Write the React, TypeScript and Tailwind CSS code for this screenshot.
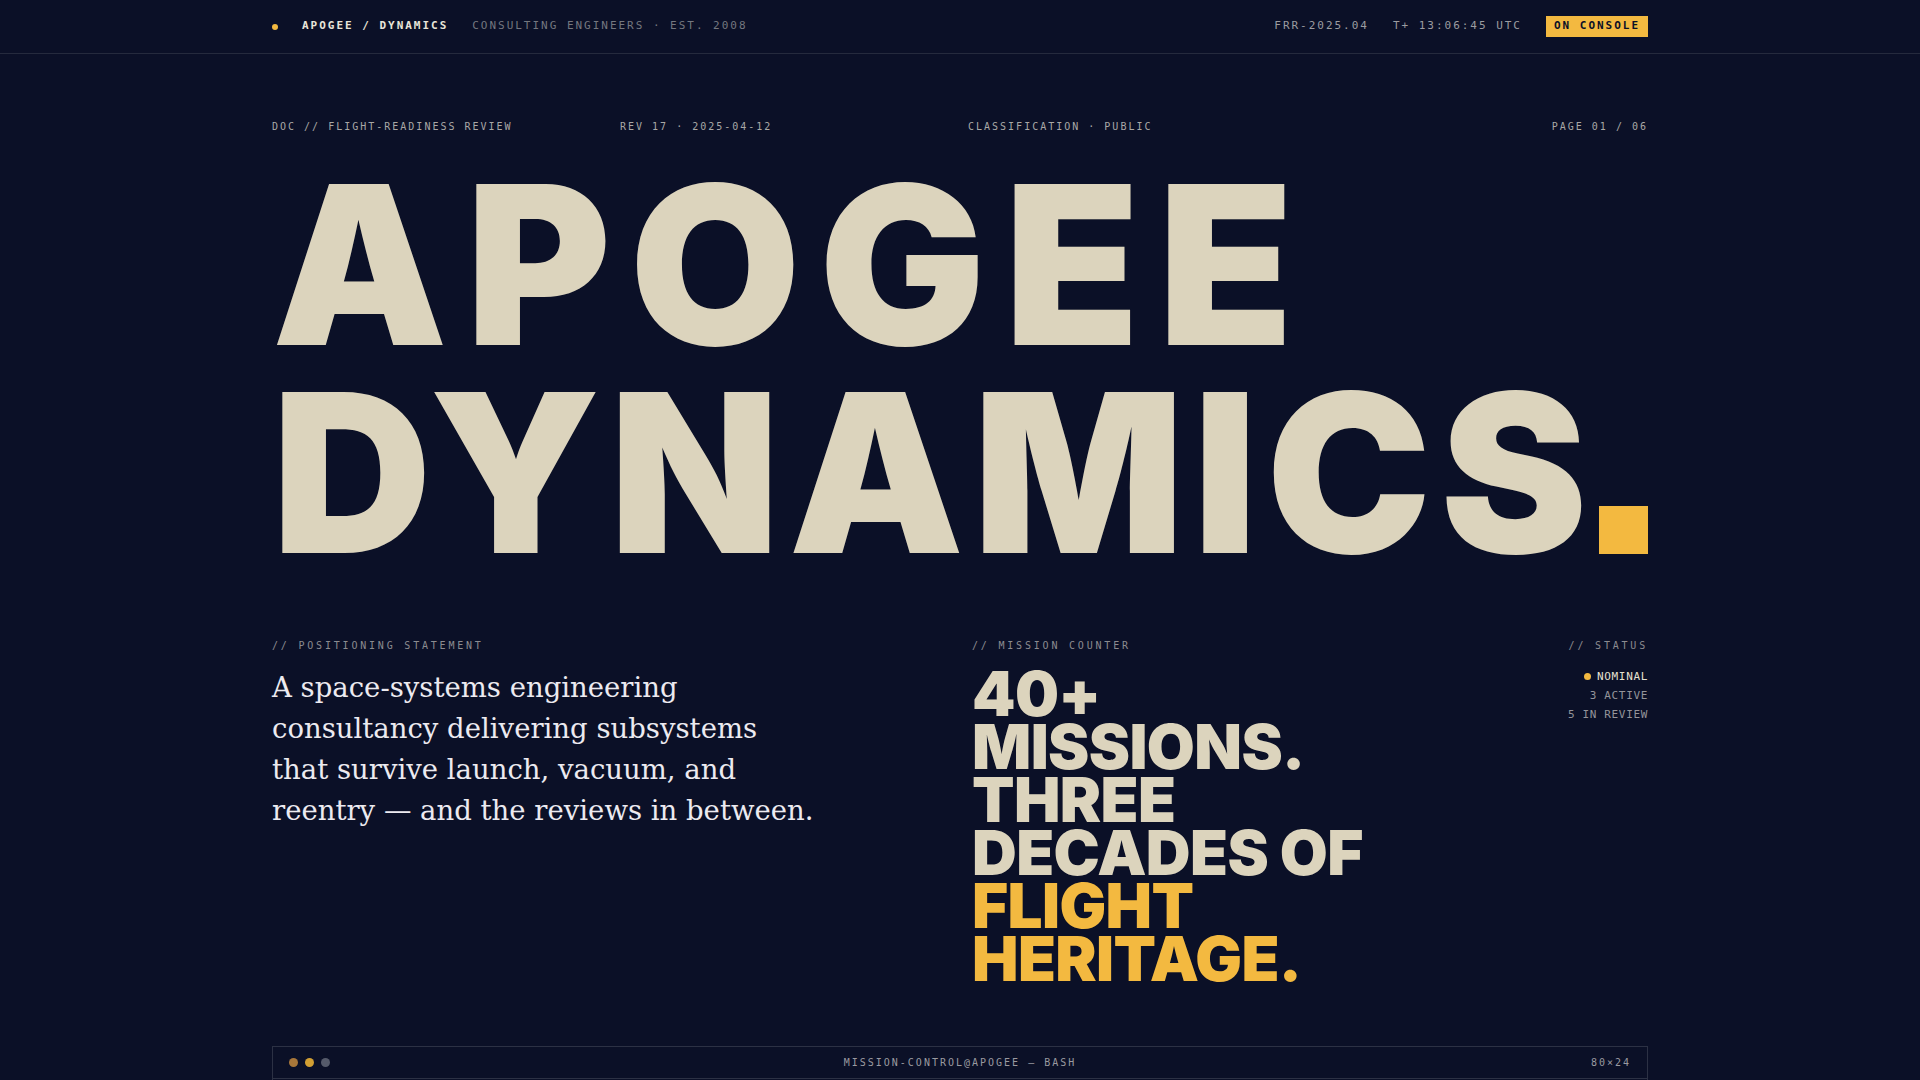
const mono = "font-['DejaVu_Sans_Mono','Liberation_Mono',monospace]";
const grot = "font-['Inter','Roboto',sans-serif]";

const TopBar = () => (
  <header className="border-b border-[#252a3d]">
    <div className={`mx-auto flex h-[53px] max-w-[1376px] items-center justify-between text-[11px] tracking-[0.18em] ${mono}`}>
      <div className="flex items-center gap-6">
        <span className="h-[6px] w-[6px] rounded-full bg-[#f3b940]" />
        <span className="font-bold text-[#e9e5d9]">APOGEE / DYNAMICS</span>
        <span className="text-[#74777f]">CONSULTING ENGINEERS · EST. 2008</span>
      </div>
      <div className="flex items-center gap-6 text-[#9c9ca0]">
        <span>FRR-2025.04</span>
        <span>T+ 13:06:45 UTC</span>
        <span className="flex h-[21px] items-center bg-[#f3b940] px-[8px] font-bold text-[#0b1027]">ON CONSOLE</span>
      </div>
    </div>
  </header>
);

const MetaRow = () => (
  <div className={`grid grid-cols-4 gap-4 text-[10px] leading-[15px] tracking-[0.2em] text-[#a9a8a6] ${mono}`}>
    <span>DOC // FLIGHT-READINESS REVIEW</span>
    <span>REV 17 · 2025-04-12</span>
    <span>CLASSIFICATION · PUBLIC</span>
    <span className="text-right">PAGE 01 / 06</span>
  </div>
);

const Label = ({ children, right }: { children: string; right?: boolean }) => (
  <div className={`text-[10px] leading-[15px] tracking-[0.28em] text-[#8b8b90] ${mono} ${right ? "text-right" : ""}`}>
    {children}
  </div>
);

export default function App() {
  return (
    <div className="min-h-screen bg-[#0b1027] pb-10">
      <TopBar />
      <main className="mx-auto max-w-[1376px]">
        <div className="pt-[65px]">
          <MetaRow />
        </div>

        <h1 className={`mt-[27px] text-[221px] font-black leading-[208px] text-[#dcd4bd] ${grot}`}>
          <span className="block tracking-[0.083em]">APOGEE</span>
          <span className="flex items-end justify-between">
            <span className="tracking-[0.04em]">DYNAMICS</span>
            <span className="mb-[23px] inline-block h-[48px] w-[49px] shrink-0 bg-[#f3b940]" />
          </span>
        </h1>

        <section className="mt-[61px] grid grid-cols-12 gap-6">
          <div className="col-span-6">
            <Label>// POSITIONING STATEMENT</Label>
            <p className="mt-[14px] font-['DejaVu_Serif','Liberation_Serif',serif] text-[27.5px] leading-[41px] text-[#eceaf0]">
              A space-systems engineering
              <br />
              consultancy delivering subsystems
              <br />
              that survive launch, vacuum, and
              <br />
              reentry — and the reviews in between.
            </p>
          </div>
          <div className="col-span-4">
            <Label>// MISSION COUNTER</Label>
            <div className={`mt-[14px] text-[62px] font-black leading-[53px] tracking-[-0.01em] text-[#dcd4bd] ${grot}`}>
              <div>40+</div>
              <div>MISSIONS.</div>
              <div>THREE</div>
              <div>DECADES OF</div>
              <div className="text-[#f3b940]">FLIGHT</div>
              <div className="text-[#f3b940]">HERITAGE.</div>
            </div>
          </div>
          <div className="col-span-2">
            <Label right>// STATUS</Label>
            <ul className={`mt-[14px] text-right text-[11px] leading-[19px] tracking-[0.06em] text-[#94949a] ${mono}`}>
              <li className="flex items-center justify-end gap-[6px] text-[#e6e1d2]">
                <span className="h-[7px] w-[7px] rounded-full bg-[#f3b940]" />
                NOMINAL
              </li>
              <li>3 ACTIVE</li>
              <li>5 IN REVIEW</li>
            </ul>
          </div>
        </section>

        <div className="mt-[61px] border border-[#2c3144]">
          <div className={`flex h-[32px] items-center justify-between border-b border-[#2c3144] px-4 text-[10px] tracking-[0.2em] text-[#9a9aa0] ${mono}`}>
            <div className="flex w-[80px] items-center gap-[7px]">
              <span className="h-[9px] w-[9px] rounded-full bg-[#a8773a]" />
              <span className="h-[9px] w-[9px] rounded-full bg-[#d29f33]" />
              <span className="h-[9px] w-[9px] rounded-full bg-[#555a6a]" />
            </div>
            <span>MISSION-CONTROL@APOGEE — BASH</span>
            <span className="w-[80px] text-right">80×24</span>
          </div>
          <div className={`px-4 py-4 text-[13px] leading-[22px] text-[#9a9aa0] ${mono}`}>
            <div>$ frr --status --mission all</div>
            <div>3 active · 5 in review · nominal</div>
          </div>
        </div>
      </main>
    </div>
  );
}
